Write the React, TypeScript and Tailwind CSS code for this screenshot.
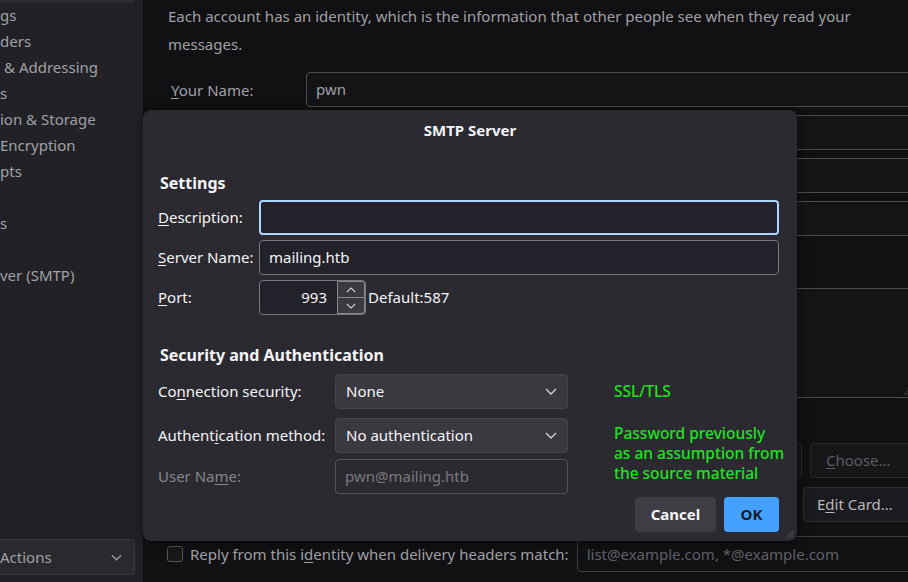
import React from 'react';

function Chevron({ className }: { className?: string }) {
  return (
    <svg viewBox="0 0 12 7" className={className} fill="none" stroke="currentColor" strokeWidth="1.3">
      <path d="M1 1l5 5 5-5" />
    </svg>
  );
}

function Grip({ className }: { className?: string }) {
  return (
    <svg viewBox="0 0 10 10" className={className} fill="none" stroke="currentColor" strokeWidth="1">
      <path d="M10 1L1 10M10 4L4 10M10 7L7 10" />
    </svg>
  );
}

const sidebarItems = ['gs', 'ders', '& Addressing', 's', 'ion & Storage', 'Encryption', 'pts', '', 's', '', 'ver (SMTP)'];

function Sidebar() {
  return (
    <div className="w-[145px] shrink-0 h-full bg-[#222226] border-r-2 border-[#0e0e10] flex flex-col text-[15px] text-[#a0a0a6]">
      <div className="h-[3px] w-[135px] bg-[#2c2c30] rounded-br-[4px]" />
      <ul className="mt-[-1px]">
        {sidebarItems.map((t, i) => (
          <li key={i} className={`h-[26px] leading-[26px] whitespace-nowrap ${i === 2 ? 'pl-[4px]' : ''}`}>
            {t}
          </li>
        ))}
      </ul>
      <div className="mt-auto mb-[7px] w-[135px] h-[36px] flex items-center justify-between pr-[12px] bg-[#2a2a2e] border border-l-0 border-[#38383c] rounded-r-[4px]">
        <span>Actions</span>
        <Chevron className="w-[11px] h-[7px] text-[#a0a0a6]" />
      </div>
    </div>
  );
}

function BgRow({ label, value, className }: { label?: React.ReactNode; value?: string; className?: string }) {
  return (
    <div className={`flex items-center ${className ?? ''}`}>
      <div className="w-[138px] pl-[3px] shrink-0">{label}</div>
      <div className="h-[35px] w-[700px] shrink-0 border border-[#4c4c52] rounded-[4px] bg-[#141417] px-[9px] flex items-center">
        {value}
      </div>
    </div>
  );
}

function Main() {
  return (
    <div className="flex-1 min-w-0 h-full overflow-hidden bg-[#111113] pl-[23px] text-[15px] text-[#a0a0a6]">
      <p className="mt-[2px] leading-[28px] whitespace-nowrap">
        Each account has an identity, which is the information that other people see when they read your
        <br />
        messages.
      </p>
      <BgRow
        className="mt-[14px]"
        label={
          <span className="relative top-[1px]">
            <u className="underline-offset-2">Y</u>our Name:
          </span>
        }
        value="pwn"
      />
      <BgRow className="mt-[8px]" />
      <BgRow className="mt-[8px]" />
      <BgRow className="mt-[8px]" />
      <div className="mt-[52px] ml-[138px] relative h-[110px] w-[700px] border border-[#4c4c52] rounded-[4px] bg-[#141417]">
        <Grip className="absolute left-[596px] bottom-[2px] w-[8px] h-[8px] text-[#4c4c52]" />
      </div>
      <div className="mt-[45px] flex items-center">
        <div className="ml-[138px] h-[35px] w-[496px] shrink-0 border border-[#2c2c30] rounded-[4px] bg-[#141417]" />
        <div className="ml-[8px] h-[35px] w-[200px] shrink-0 border border-[#26262a] rounded-[4px] bg-[#17171a] pl-[15px] flex items-center text-[#5c5c62]">
          <span>
            <u className="underline-offset-2">C</u>hoose…
          </span>
        </div>
      </div>
      <div className="mt-[9px] ml-[635px] h-[35px] w-[200px] border border-[#2e2e33] rounded-[4px] bg-[#1b1b1f] pl-[13px] flex items-center text-[#b8b8be]">
        <span>
          E<u className="underline-offset-2">d</u>it Card…
        </span>
      </div>
      <div className="mt-[14px] flex items-center">
        <div className="ml-[-1px] w-[16px] h-[16px] shrink-0 border border-[#55555b] rounded-[3px] bg-[#18181b]" />
        <span className="ml-[7px] shrink-0 whitespace-nowrap">
          Reply from this i<u className="underline-offset-2">d</u>entity when delivery headers match:
        </span>
        <div className="ml-[8px] h-[36px] w-[400px] shrink-0 border border-[#3c3c42] rounded-[4px] bg-[#111113] px-[9px] flex items-center text-[#606066]">
          list@example.com, *@example.com
        </div>
      </div>
    </div>
  );
}

function Label({ children, w, dim }: { children: React.ReactNode; w: string; dim?: boolean }) {
  return <div className={`${w} shrink-0 whitespace-nowrap ${dim ? 'text-[#86868c]' : ''}`}>{children}</div>;
}

function Select({ value }: { value: string }) {
  return (
    <div className="w-[233px] h-[35px] shrink-0 bg-[#3a3940] border border-[#45444b] rounded-[4px] pl-[10px] pr-[10px] flex items-center justify-between">
      <span>{value}</span>
      <Chevron className="w-[12px] h-[7px] text-[#d8d8dc]" />
    </div>
  );
}

function Dialog() {
  return (
    <div className="absolute left-[143px] top-[110px] w-[654px] h-[431px] rounded-[8px] bg-[#2b2a30] shadow-[0_2px_12px_rgba(0,0,0,0.5)] text-[15px] text-[#f4f4f6] flex flex-col pl-[15px] pr-[18px]">
      <div className="h-[40px] -ml-[15px] -mr-[18px] flex items-center justify-center font-bold">SMTP Server</div>
      <div className="mt-[23px] ml-[2px] leading-[20px] text-[16px] font-bold">Settings</div>

      <div className="mt-[7px] flex items-center">
        <Label w="w-[101px]">
          <u className="underline-offset-2">D</u>escription:
        </Label>
        <div className="flex-1 h-[35px] border-2 border-[#aad6ff] rounded-[4px] bg-[#23222a]" />
      </div>
      <div className="mt-[5px] flex items-center">
        <Label w="w-[101px]">
          <u className="underline-offset-2">S</u>erver Name:
        </Label>
        <div className="flex-1 h-[35px] border border-[#77767c] rounded-[4px] bg-[#23222a] px-[9px] flex items-center">
          mailing.htb
        </div>
      </div>
      <div className="mt-[5px] flex items-center">
        <Label w="w-[101px]">
          <u className="underline-offset-2">P</u>ort:
        </Label>
        <div className="w-[107px] h-[35px] border border-[#77767c] rounded-[4px] bg-[#23222a] flex">
          <div className="flex-1 flex items-center justify-end pr-[10px]">993</div>
          <div className="w-[28px] flex flex-col">
            <div className="flex-1 border border-[#8a898f] rounded-tr-[3px] bg-[#3b3a40] flex items-center justify-center">
              <Chevron className="w-[10px] h-[6px] rotate-180 text-[#e0e0e4]" />
            </div>
            <div className="flex-1 border border-t-0 border-[#8a898f] rounded-br-[3px] bg-[#3b3a40] flex items-center justify-center">
              <Chevron className="w-[10px] h-[6px] text-[#e0e0e4]" />
            </div>
          </div>
        </div>
        <span className="ml-[2px]">Default:587</span>
      </div>

      <div className="mt-[30px] ml-[2px] leading-[20px] text-[16px] font-bold">Security and Authentication</div>

      <div className="mt-[9px] flex items-center">
        <Label w="w-[177px]">
          Co<u className="underline-offset-2">n</u>nection security:
        </Label>
        <Select value="None" />
        <div className="ml-[46px] text-[15.5px] text-[#1fe21f] font-medium">SSL/TLS</div>
      </div>
      <div className="mt-[9px] flex items-start">
        <div className="flex flex-col">
          <div className="flex items-center">
            <Label w="w-[177px]">
              Authent<u className="underline-offset-2">i</u>cation method:
            </Label>
            <Select value="No authentication" />
          </div>
          <div className="mt-[6px] flex items-center">
            <Label w="w-[177px]" dim>
              User Na<u className="underline-offset-2">m</u>e:
            </Label>
            <div className="w-[233px] h-[35px] border border-[#55545a] rounded-[4px] px-[9px] flex items-center text-[#7a797f]">
              pwn@mailing.htb
            </div>
          </div>
        </div>
        <div className="ml-[46px] mt-[5px] leading-[20px] text-[15.5px] text-[#1fe21f] font-medium whitespace-nowrap">
          Password previously
          <br />
          as an assumption from
          <br />
          the source material
        </div>
      </div>

      <div className="mt-[3px] flex justify-end gap-[8px]">
        <div className="w-[81px] h-[35px] rounded-[4px] bg-[#3e3d43] flex items-center justify-center font-bold">Cancel</div>
        <div className="w-[55px] h-[35px] rounded-[4px] bg-[#45a1ff] flex items-center justify-center font-bold text-[#1c1b22]">OK</div>
      </div>
      <Grip className="absolute right-[3px] bottom-[3px] w-[9px] h-[9px] text-[#5a595f]" />
    </div>
  );
}

export default function App() {
  return (
    <div className="relative w-[908px] h-[582px] overflow-hidden flex font-['Noto_Sans','Open_Sans',sans-serif]">
      <Sidebar />
      <Main />
      <Dialog />
    </div>
  );
}
